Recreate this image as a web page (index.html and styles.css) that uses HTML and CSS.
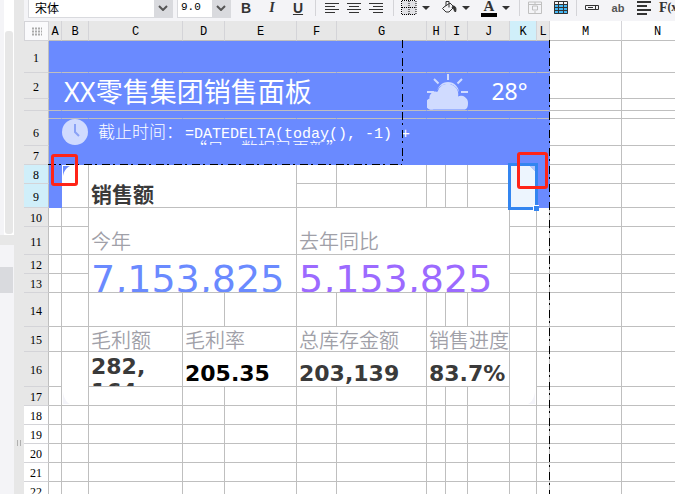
FILE: index.html
```
<!DOCTYPE html>
<html lang="zh-CN">
<head>
    <meta charset="UTF-8">
    <meta name="viewport" content="width=device-width, initial-scale=1.0">
    <title>零售集团销售面板</title>
    <link rel="stylesheet" href="styles.css">
</head>
<body>
    <aside class="side-panel">
        <div class="side-scroll"><div class="side-thumb"></div></div>
        <div class="side-divider"></div>
        <div class="side-list"><div class="side-item"></div></div>
    </aside>
    <div class="splitter"><span class="grip"></span></div>

    <main class="editor">
        <div class="toolbar">
            <div class="picker picker-font">
                <select aria-label="字体"><option>宋体</option></select>
                <svg class="chevron" viewBox="0 0 10 6"><path d="M1 1l4 4 4-4"/></svg>
            </div>
            <div class="picker picker-size">
                <select aria-label="字号"><option>9.0</option></select>
                <svg class="chevron" viewBox="0 0 10 6"><path d="M1 1l4 4 4-4"/></svg>
            </div>
            <div class="group styles">
                <button class="bold" aria-label="加粗">B</button>
                <button class="italic" aria-label="斜体">I</button>
                <button class="underline" aria-label="下划线">U</button>
            </div>
            <span class="sep"></span>
            <div class="group aligns">
                <button aria-label="左对齐"><svg viewBox="0 0 16 16"><path d="M1 3.500h14M1 6.500h10M1 9.500h14M1 12.500h10"/></svg></button>
                <button aria-label="居中"><svg viewBox="0 0 16 16"><path d="M1 3.500h14M3 6.500h10M1 9.500h14M3 12.500h10"/></svg></button>
                <button aria-label="右对齐"><svg viewBox="0 0 16 16"><path d="M1 3.500h14M5 6.500h10M1 9.500h14M5 12.500h10"/></svg></button>
            </div>
            <span class="sep"></span>
            <div class="group">
                <button aria-label="边框"><svg viewBox="0 0 16 16"><path class="cell-fill" d="M1 1h14v14H1z"/><path class="dots" d="M1 .5h14M1 14.500h14M.5 1v14M15 1v14M8 1v14M1 7.500h14"/></svg></button>
                <button class="caret" aria-label="更多边框"></button>
            </div>
            <div class="group">
                <button aria-label="填充色"><svg viewBox="0 0 16 16"><path d="M5 6V1.500h3v6M3 7l6-4 4 4-5 5H5L1.500 8.500z"/><path class="solid" d="M12 6c3 0 3.500 3 2.500 6-2-1-1-4-3.500-4z"/></svg></button>
                <button class="caret" aria-label="更多填充色"></button>
            </div>
            <div class="group">
                <button class="font-color" aria-label="字体颜色">A</button>
                <button class="caret" aria-label="更多字体颜色"></button>
            </div>
            <span class="sep"></span>
            <div class="group tables">
                <button aria-label="合并单元格" disabled><svg viewBox="0 0 16 16"><path class="faded" d="M1.500 2h13v11.500h-13zM1.500 4.500h13M8 2v2M8 11v2"/><path class="faded" d="M5.500 6h5v4h-5z"/></svg></button>
                <button aria-label="取消合并"><svg viewBox="0 0 16 16"><path class="blue-fill" d="M1 4h14v10H1z"/><path d="M1.500 1.500h13v12h-13zM1.500 4.500h13M1.500 7.500h13M1.500 10.500h13M5.500 1.500v12M10.500 1.500v12"/></svg></button>
            </div>
            <span class="sep"></span>
            <div class="group inserts">
                <button aria-label="控件"><svg viewBox="0 0 16 16"><path d="M1.500 5.500h13v4h-13zM11.500 5.500v4M4 7.500h5"/></svg></button>
                <button class="ab" aria-label="文本">ab</button>
                <button aria-label="富文本"><svg class="thick" viewBox="0 0 16 16"><path d="M1 2h14M1 6h10M1 10h14M1 14h10"/></svg></button>
                <button class="fx" aria-label="公式">F<small>(x)</small></button>
            </div>
        </div>

        <div class="sheet">
            <table>
                <colgroup>
                    <col class="w-head"><col class="w-edge"><col class="w-pad"><col class="w-c"><col class="w-d"><col class="w-e"><col class="w-f"><col class="w-g"><col class="w-h"><col class="w-i"><col class="w-d"><col class="w-pad"><col class="w-edge"><col class="w-e"><col class="w-e">
                </colgroup>
                <thead>
                    <tr>
                        <th class="corner"><svg viewBox="0 0 12 9"><path d="M1 1.500h10M1 4.500h10M1 7.500h10"/></svg></th>
                        <th>A</th><th>B</th><th>C</th><th>D</th><th>E</th><th>F</th><th>G</th><th>H</th><th>I</th><th>J</th><th class="active">K</th><th>L</th><th class="outside">M</th><th class="outside">N</th>
                    </tr>
                </thead>
                <tbody>
                    <tr class="h32"><th>1</th><td class="banner"></td><td class="banner"></td><td class="banner"></td><td class="banner"></td><td class="banner"></td><td class="banner"></td><td class="banner"></td><td class="banner"></td><td class="banner"></td><td class="banner"></td><td class="banner"></td><td class="banner"></td><td></td><td></td></tr>
                    <tr class="h26">
                        <th>2</th>
                        <td class="banner" rowspan="2"></td>
                        <td class="banner" rowspan="2" colspan="6"><div class="title">XX零售集团销售面板</div></td>
                        <td class="banner" rowspan="2" colspan="2">
                            <svg class="weather" viewBox="0 0 41 37">
                                <g class="rays"><path d="M21 1v6M7 6l4.500 4.500M35 6l-4.500 4.500M0 19h7M41 19h-7"/><path class="sun" d="M11 20a10 10 0 0 1 20 0"/></g>
                                <path class="halo" d="M7 36a6 6 0 0 1-1-12.500 6 6 0 0 1 5-6 11 11 0 0 1 20.500 4A7 7 0 0 1 34 36z"/>
                                <path class="cloud" d="M6.500 36.500a5.500 5.500 0 0 1-4-11 6 6 0 0 1 8-6.600 10.500 10.500 0 0 1 20.500 4.600 7 7 0 0 1 10 6.500c0 4-1 6.500-4 6.500z"/>
                            </svg>
                        </td>
                        <td class="banner" rowspan="2" colspan="3"><div class="degrees">28°</div></td>
                        <td></td><td></td>
                    </tr>
                    <tr class="h12"><th></th><td></td><td></td></tr>
                    <tr class="h8"><th class="joined"></th><td class="banner"></td><td class="banner"></td><td class="banner"></td><td class="banner"></td><td class="banner"></td><td class="banner"></td><td class="banner"></td><td class="banner"></td><td class="banner"></td><td class="banner"></td><td class="banner"></td><td class="banner"></td><td></td><td></td></tr>
                    <tr class="h27">
                        <th>6</th>
                        <td class="banner plain"></td>
                        <td class="banner plain">
                            <svg class="clock" viewBox="0 0 26 26"><circle cx="13" cy="13" r="13"/><path d="M13 5v8l4 4"/></svg>
                        </td>
                        <td class="banner plain" colspan="10">
                            <div class="deadline">
                                <div class="deadline-line">截止时间：<code>=DATEDELTA(today(), -1) +</code></div>
                                <div class="deadline-next">“日，数据已更新”</div>
                            </div>
                        </td>
                        <td></td><td></td>
                    </tr>
                    <tr class="h19"><th>7</th><td class="banner plain" colspan="12"></td><td></td><td></td></tr>
                    <tr class="h19">
                        <th class="active">8</th>
                        <td class="banner plain" rowspan="2"></td>
                        <td rowspan="2" class="card-corner"><svg viewBox="0 0 26 42"><path class="corner-blue" d="M1 1h7C4 3 2 6 1 11z"/></svg></td>
                        <td rowspan="2" colspan="3"><div class="heading">销售额</div></td>
                        <td></td><td></td><td></td><td></td><td></td>
                        <td rowspan="2"></td>
                        <td class="banner plain" rowspan="2"></td>
                        <td></td><td></td>
                    </tr>
                    <tr class="h24"><th class="active">9</th><td></td><td></td><td></td><td></td><td></td><td></td><td></td></tr>
                    <tr class="h19">
                        <th>10</th><td></td><td></td>
                        <td rowspan="2" colspan="3"><div class="label low">今年</div></td>
                        <td rowspan="2" colspan="5"><div class="label low">去年同比</div></td>
                        <td></td><td></td><td></td><td></td>
                    </tr>
                    <tr class="h28"><th>11</th><td></td><td></td><td></td><td></td><td></td><td></td></tr>
                    <tr class="h19">
                        <th>12</th><td></td><td></td>
                        <td rowspan="2" colspan="3"><div class="total current">7,153,825</div></td>
                        <td rowspan="2" colspan="5"><div class="total previous">5,153,825</div></td>
                        <td></td><td></td><td></td><td></td>
                    </tr>
                    <tr class="h19"><th>13</th><td></td><td></td><td></td><td></td><td></td><td></td></tr>
                    <tr class="h34"><th>14</th><td></td><td></td><td></td><td></td><td></td><td></td><td></td><td></td><td></td><td></td><td></td><td></td><td></td><td></td></tr>
                    <tr class="h25">
                        <th>15</th><td></td><td></td>
                        <td><div class="label">毛利额</div></td>
                        <td colspan="2"><div class="label">毛利率</div></td>
                        <td colspan="2"><div class="label">总库存金额</div></td>
                        <td colspan="3"><div class="label">销售进度</div></td>
                        <td></td><td></td><td></td><td></td>
                    </tr>
                    <tr class="h35">
                        <th>16</th><td></td>
                        <td rowspan="2" class="card-corner"><svg viewBox="0 0 26 53"><path class="corner-pale" d="M1 40c1 6 3 10 7 12H1z"/></svg></td>
                        <td><div class="value wrapped">282,<br>164</div></td>
                        <td colspan="2"><div class="value black">205.35</div></td>
                        <td colspan="2"><div class="value">203,139</div></td>
                        <td colspan="3"><div class="value">83.7%</div></td>
                        <td rowspan="2" class="card-corner"><svg viewBox="0 0 26 53"><path class="corner-pale" d="M25 40c-1 6-3 10-7 12h7z"/></svg></td>
                        <td></td><td></td><td></td>
                    </tr>
                    <tr class="h19"><th>17</th><td></td><td></td><td></td><td></td><td></td><td></td><td></td><td></td><td></td><td></td><td></td><td></td></tr>
                    <tr class="h19"><th class="outside">18</th><td></td><td></td><td></td><td></td><td></td><td></td><td></td><td></td><td></td><td></td><td></td><td></td><td></td><td></td></tr>
                    <tr class="h19"><th class="outside">19</th><td></td><td></td><td></td><td></td><td></td><td></td><td></td><td></td><td></td><td></td><td></td><td></td><td></td><td></td></tr>
                    <tr class="h19"><th class="outside">20</th><td></td><td></td><td></td><td></td><td></td><td></td><td></td><td></td><td></td><td></td><td></td><td></td><td></td><td></td></tr>
                    <tr class="h19"><th class="outside">21</th><td></td><td></td><td></td><td></td><td></td><td></td><td></td><td></td><td></td><td></td><td></td><td></td><td></td><td></td></tr>
                    <tr class="h19"><th class="outside">22</th><td></td><td></td><td></td><td></td><td></td><td></td><td></td><td></td><td></td><td></td><td></td><td></td><td></td><td></td></tr>
                </tbody>
            </table>

            <!-- page breaks, selection and markers lie over the grid -->
            <div class="break break-v inner"></div>
            <div class="break break-v outer"></div>
            <div class="break break-h"></div>
            <div class="selection"><span class="handle"></span></div>
            <div class="marker marker-left"></div>
            <div class="marker marker-right"></div>
        </div>
    </main>
</body>
</html>
```
FILE: styles.css
```
* {
    box-sizing: border-box;
}

body {
    margin: 0;
    height: 100vh;
    display: flex;
    overflow: hidden;
    background: #fff;
    font-family: "Noto Sans", "Noto Sans CJK SC", sans-serif;
}

/* left panel */
.side-panel {
    width: 14px;
    display: flex;
    flex-direction: column;
    background: #f4f4f7;
}

.side-scroll {
    height: 235px;
    margin-left: 4px;
    padding: 31px 1px 1px;
    background: #fff;
}

.side-thumb {
    height: 100%;
    border-radius: 3px;
    background: #e7e7e7;
}

.side-divider {
    height: 10px;
    background: #e7e7e7;
}

.side-list {
    flex: 1;
    padding-top: 22px;
}

.side-item {
    height: 26px;
    margin-right: 1px;
    background: #d9dade;
}

.splitter {
    width: 10px;
    padding: 440px 3px 0;
    background: #e7e7e7;
}

.grip {
    display: block;
    height: 6px;
    border: solid #b0b0b0;
    border-width: 0 1px;
}

.editor {
    flex: 1;
    min-width: 0;
    display: flex;
    flex-direction: column;
}

/* toolbar */
.toolbar {
    height: 21px;
    flex: none;
    display: flex;
    align-items: flex-start;
    padding-left: 4px;
    overflow: hidden;
    background: #f4f4f7;
}

.picker {
    position: relative;
    flex: none;
    height: 18px;
}

.picker-font {
    width: 145px;
    margin-right: 4px;
}

.picker-size {
    width: 54px;
    margin-right: 2px;
}

.picker select {
    appearance: none;
    display: block;
    width: 100%;
    height: 18px;
    padding: 0 20px 2px 6px;
    border: 1px solid #d9dade;
    border-top: 0;
    border-radius: 0;
    background-color: #fff;
    background-image: linear-gradient(#d9dade, #d9dade);
    background-position: right top;
    background-repeat: no-repeat;
    background-size: 18px 18px;
    color: #000;
    font: 12px/15px "Noto Sans CJK SC", sans-serif;
}

.picker-size select {
    padding-left: 3px;
    font: 11px/15px "Liberation Mono", monospace;
}

.toolbar .chevron {
    position: absolute;
    right: 5px;
    top: 5px;
    width: 10px;
    height: 6px;
    stroke: #555;
    stroke-width: 2;
    pointer-events: none;
}

.group {
    display: flex;
    flex: none;
    margin-right: 6px;
}

.toolbar button {
    width: 20px;
    height: 16px;
    padding: 0;
    border: 0;
    background: none;
    color: #333;
    font: bold 14px/16px "Liberation Sans", sans-serif;
    display: flex;
    justify-content: center;
}

.toolbar svg {
    flex: none;
    fill: none;
    stroke: #333;
}

.toolbar button svg {
    width: 16px;
    height: 16px;
}

.toolbar .styles {
    margin-right: 4px;
}

.toolbar .styles button {
    width: 26px;
}

.toolbar .italic {
    font-family: "Liberation Serif", serif;
    font-style: italic;
}

.toolbar .underline {
    text-decoration: underline;
}

.toolbar .aligns button {
    width: 22px;
}

.sep {
    flex: none;
    width: 1px;
    height: 16px;
    margin-right: 5px;
    background: #d4d4d8;
}

.toolbar .caret {
    width: 14px;
    align-items: center;
}

.caret::after {
    content: "";
    border: 4px solid transparent;
    border-top-color: #333;
    border-bottom: 0;
}

.toolbar .font-color {
    height: 17px;
    font: bold 15px/13px "Liberation Serif", serif;
    border-bottom: 4px solid #000;
    width: 16px;
    margin: 0 2px;
}

.toolbar .tables {
    gap: 6px;
    margin-right: 5px;
}

.toolbar .inserts {
    gap: 6px;
}

.toolbar .ab {
    color: #555;
    font-size: 11px;
}

.toolbar .fx {
    font: bold 14px/16px "Liberation Serif", serif;
}

.toolbar .solid {
    fill: #333;
}

.toolbar .dots {
    stroke: #000;
    stroke-dasharray: 1 1;
}

.toolbar .cell-fill {
    fill: #e0e0e4;
    stroke: none;
}

.toolbar .blue-fill {
    fill: #45b8f5;
    stroke: none;
}

.toolbar .faded {
    stroke: #c0c0c0;
}

.toolbar .thick {
    stroke-width: 2;
}

/* grid */
.sheet {
    position: relative;
    flex: 1;
    overflow: hidden;
}

table {
    width: 670px;
    table-layout: fixed;
    border-collapse: separate;
    border-spacing: 0;
}

.w-head { width: 25px; }
.w-edge { width: 13px; }
.w-pad { width: 27px; }
.w-c { width: 94px; }
.w-d { width: 42px; }
.w-e { width: 72px; }
.w-f { width: 40px; }
.w-g { width: 90px; }
.w-h { width: 19px; }
.w-i { width: 22px; }

thead tr { height: 20px; }
.h8 { height: 8px; }
.h12 { height: 12px; }
.h19 { height: 19px; }
.h24 { height: 24px; }
.h25 { height: 25px; }
.h26 { height: 26px; }
.h27 { height: 27px; }
.h28 { height: 28px; }
.h32 { height: 32px; }
.h34 { height: 34px; }
.h35 { height: 35px; }

th,
td {
    padding: 0;
    border: solid #bfbfbf;
    border-width: 0 1px 1px 0;
}

th {
    background: #e7e7e7;
    color: #000;
    font: 12px/12px "Liberation Serif", serif;
}

thead th {
    padding-top: 2px;
    border-right-color: #d4d4d8;
    font-family: "Liberation Mono", monospace;
}

tbody th {
    padding-top: 2px;
    border-bottom-color: #d4d4d8;
}

th.active {
    background: #d0effa;
}

th.outside {
    background: #fff;
}

th.joined {
    padding: 0;
    border-bottom-color: #e7e7e7;
}

th.corner {
    padding: 0;
    border: 1px solid #d4d4d8;
    background: #fafafc;
}

.corner svg {
    display: block;
    width: 12px;
    height: 9px;
    margin: auto;
    stroke: #aaa;
    stroke-width: 2;
    stroke-dasharray: 2 1;
}

td {
    vertical-align: top;
    white-space: nowrap;
}

td svg {
    display: block;
}

.banner {
    background: #6a8aff;
    border-right-color: #6a8aff;
    color: #fff;
}

.plain {
    border-color: #6a8aff;
}

.title {
    height: 37px;
    padding-left: 2px;
    font-size: 27px;
    line-height: 37px;
}

.degrees {
    height: 37px;
    padding-left: 2px;
    font-size: 23px;
    line-height: 37px;
    text-align: center;
}

.weather {
    width: 41px;
    height: 37px;
    fill: none;
}

.rays {
    stroke: #d0dbff;
    stroke-width: 2;
}

.cloud,
.clock circle {
    fill: #d0dbff;
}

.halo {
    stroke: #6a8aff;
    stroke-width: 2;
}

.clock {
    width: 26px;
    height: 26px;
    fill: none;
    stroke-width: 2;
}

.clock path {
    stroke: #8aa2f6;
}

.deadline {
    height: 26px;
    padding: 3px 0 0 9px;
    overflow: hidden;
    font-family: "Noto Sans CJK SC", sans-serif;
    font-size: 17px;
    line-height: 17px;
    font-weight: 300;
}

.deadline-line {
    height: 17px;
}

.deadline code {
    margin-left: 2px;
    font: 15px/15px "Liberation Mono", monospace;
}

.deadline-next {
    padding-left: 92px;
}

.card-corner svg {
    width: 26px;
}

.corner-blue {
    fill: #6a8aff;
}

.corner-pale {
    fill: #f4f4fa;
}

.heading {
    height: 42px;
    padding: 16px 0 0 2px;
    color: #3a3a3a;
    font-size: 21px;
    line-height: 26px;
    font-weight: bold;
}

.label {
    height: 24px;
    padding-left: 2px;
    color: #a0a0a8;
    font-size: 20px;
    line-height: 28px;
    font-weight: 350;
}

.label.low {
    height: 46px;
    padding-top: 20px;
}

.total {
    height: 37px;
    padding: 2px 0 0 2px;
    overflow: hidden;
    font: 38px/44px "DejaVu Sans", sans-serif;
}

.current {
    color: #6a8aff;
}

.previous {
    color: #9c6aff;
}

.value {
    height: 34px;
    padding: 9px 0 0 2px;
    overflow: hidden;
    color: #3a3a3a;
    font: bold 22px/26px "DejaVu Sans", sans-serif;
}

.wrapped {
    padding-top: 2px;
    line-height: 25px;
}

.black {
    color: #000;
}

/* overlays */
.break {
    position: absolute;
}

.break-v {
    top: 19px;
    width: 1px;
    background: repeating-linear-gradient(#000 0 8px, transparent 8px 11px, #000 11px 13px, transparent 13px 18px);
}

.inner {
    left: 378px;
    height: 124px;
}

.outer {
    left: 525px;
    bottom: 0;
}

.break-h {
    top: 143px;
    left: 24px;
    width: 354px;
    height: 1px;
    background: repeating-linear-gradient(90deg, #000 0 8px, transparent 8px 11px, #000 11px 13px, transparent 13px 18px);
}

.selection {
    position: absolute;
    top: 142px;
    left: 484px;
    width: 30px;
    height: 47px;
    border: 3px solid #3385f0;
    background: linear-gradient(225deg, #b5c6fa 4px, #edf5fe 4px);
}

.handle {
    position: absolute;
    right: -4px;
    bottom: -4px;
    width: 6px;
    height: 6px;
    border: solid #fff;
    border-width: 1px 0 0 1px;
    background: #3385f0;
}

.marker {
    position: absolute;
    border: 3px solid #ff2418;
    border-radius: 3px;
}

.marker-left {
    top: 133px;
    left: 27px;
    width: 27px;
    height: 32px;
}

.marker-right {
    top: 131px;
    left: 493px;
    width: 31px;
    height: 37px;
}
```
